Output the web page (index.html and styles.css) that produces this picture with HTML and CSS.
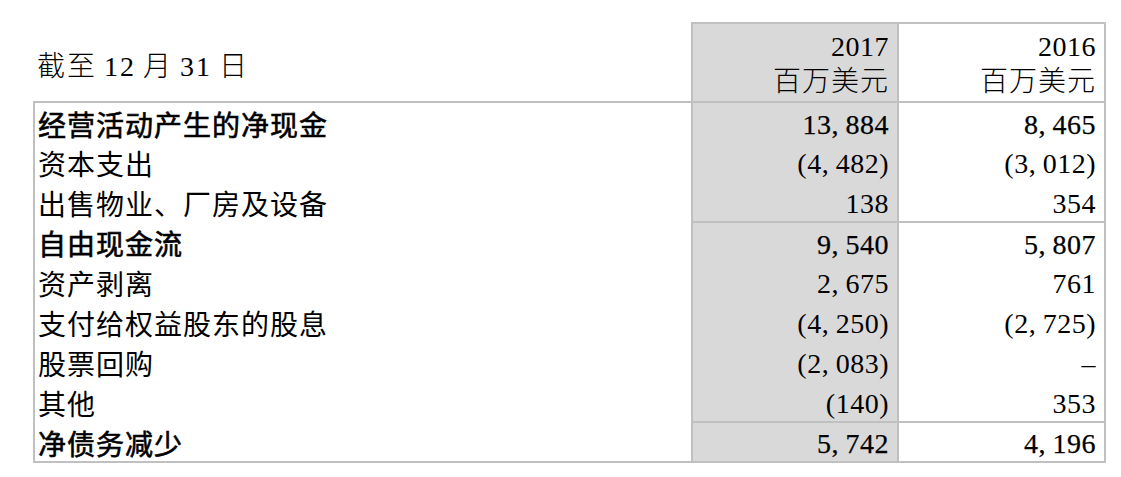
FILE: index.html
```html
<!DOCTYPE html>
<html lang="zh-CN">
<head>
<meta charset="utf-8">
<title>自由现金流</title>
<link rel="stylesheet" href="styles.css">
</head>
<body>
<div class="page">
  <table class="fin">
    <colgroup>
      <col class="c-lbl">
      <col class="c-a">
      <col class="c-b">
    </colgroup>
    <thead>
      <tr class="head">
        <th class="lbl">截至 12 月 31 日</th>
        <th class="num cur">2017<br><span class="unit">百万美元</span></th>
        <th class="num">2016<br><span class="unit">百万美元</span></th>
      </tr>
    </thead>
    <tbody>
      <tr class="bold">
        <td class="lbl">经营活动产生的净现金</td>
        <td class="num cur">13<span class="cm">,</span>884</td>
        <td class="num">8<span class="cm">,</span>465</td>
      </tr>
      <tr>
        <td class="lbl">资本支出</td>
        <td class="num cur">(4<span class="cm">,</span>482)</td>
        <td class="num">(3<span class="cm">,</span>012)</td>
      </tr>
      <tr class="sep">
        <td class="lbl">出售物业、厂房及设备</td>
        <td class="num cur">138</td>
        <td class="num">354</td>
      </tr>
      <tr class="bold">
        <td class="lbl">自由现金流</td>
        <td class="num cur">9<span class="cm">,</span>540</td>
        <td class="num">5<span class="cm">,</span>807</td>
      </tr>
      <tr>
        <td class="lbl">资产剥离</td>
        <td class="num cur">2<span class="cm">,</span>675</td>
        <td class="num">761</td>
      </tr>
      <tr>
        <td class="lbl">支付给权益股东的股息</td>
        <td class="num cur">(4<span class="cm">,</span>250)</td>
        <td class="num">(2<span class="cm">,</span>725)</td>
      </tr>
      <tr>
        <td class="lbl">股票回购</td>
        <td class="num cur">(2<span class="cm">,</span>083)</td>
        <td class="num">–</td>
      </tr>
      <tr class="sep">
        <td class="lbl">其他</td>
        <td class="num cur">(140)</td>
        <td class="num">353</td>
      </tr>
      <tr class="bold last">
        <td class="lbl">净债务减少</td>
        <td class="num cur">5<span class="cm">,</span>742</td>
        <td class="num">4<span class="cm">,</span>196</td>
      </tr>
    </tbody>
  </table>
</div>
</body>
</html>
```
FILE: styles.css
```css
html, body {
  margin: 0;
  padding: 0;
  background: #ffffff;
}

.page {
  padding: 22px 0 0 33px;
}

.fin {
  border-collapse: collapse;
  table-layout: fixed;
  width: 1071px;
  font-family: "Liberation Serif", "Noto Sans CJK SC", serif;
  font-size: 28px;
  color: #000;
}

.c-lbl { width: 658px; }
.c-a { width: 206px; }
.c-b { width: 207px; }

.fin th,
.fin td {
  padding: 0 8px 0 3px;
  font-weight: normal;
  line-height: 35px;
}

.fin tbody tr {
  height: 40px;
}

.fin tbody td {
  vertical-align: middle;
  padding-top: 3px;
}

.head {
  height: 79px;
}

.head th {
  vertical-align: top;
  padding-top: 5px;
  padding-bottom: 2px;
}

.head th.lbl {
  text-align: left;
  vertical-align: middle;
  padding-top: 11px;
  border-bottom: 2px solid #c0c0c0;
  word-spacing: -2px;
  letter-spacing: 2px;
}

.head th.num {
  border: 2px solid #c0c0c0;
}

.unit {
  font-weight: 300;
  letter-spacing: 1px;
}

.lbl {
  text-align: left;
  letter-spacing: 1px;
  font-family: "Noto Sans CJK SC", sans-serif;
  font-weight: 300;
}

.head th.lbl {
  font-family: "Liberation Serif", "Noto Sans CJK SC", serif;
  font-weight: 300;
}

.num {
  text-align: right;
  letter-spacing: 0.5px;
}

.cur {
  background: #d9d9d9;
}

.fin tbody td.lbl {
  border-left: 2px solid #c0c0c0;
}

.fin tbody td.num {
  border-left: 2px solid #c0c0c0;
  border-right: 2px solid #c0c0c0;
}

.cm {
  letter-spacing: 7px;
}

.sep td.num {
  border-bottom: 2px solid #c0c0c0;
}

.last td {
  border-bottom: 2px solid #c0c0c0;
}

.fin .bold .lbl {
  font-weight: normal;
  -webkit-text-stroke: 0.6px #000;
}

.bold .num {
  -webkit-text-stroke: 0.25px #000;
}
```
